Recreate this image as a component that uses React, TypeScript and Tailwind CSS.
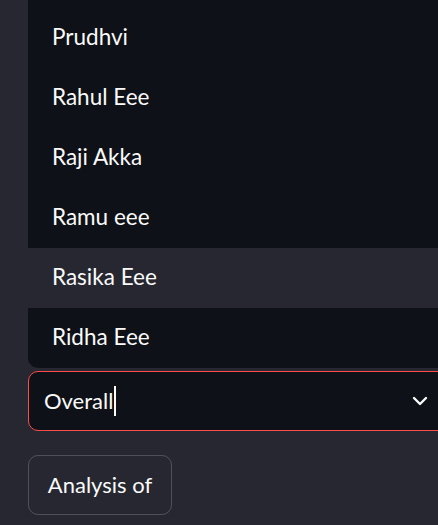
import React from "react";

const items = ["Prudhvi", "Rahul Eee", "Raji Akka", "Ramu eee", "Rasika Eee", "Ridha Eee"];

export default function App() {
  return (
    <div
      className="w-[438px] h-[525px] overflow-hidden bg-[#262730] text-[#fafafa] relative"
      style={{ fontFamily: '"Source Sans Pro", "Lato", "Noto Sans", sans-serif' }}
    >
      <div className="pl-[28px] flex flex-col">
        <div className="h-[368px] overflow-hidden rounded-b-[10px] bg-[#0e1117] w-[430px] flex flex-col justify-end">
          {items.map((it) => (
            <div
              key={it}
              className={`h-[60px] shrink-0 flex items-center pl-[24px] pb-[3px] text-[22.5px] ${it === "Rasika Eee" ? "bg-[#262730]" : ""}`}
            >
              {it}
            </div>
          ))}
        </div>
        <div className="mt-[3px] h-[60px] w-[430px] rounded-[10px] border border-[#ff4b4b] bg-[#0e1117] flex items-center pl-[15px]">
          <span className="text-[22px] leading-none">Overall</span>
          <span className="w-[2px] h-[30px] bg-[#fafafa] ml-[1px]" />
          <svg className="ml-auto mr-[29px]" width="16" height="16" viewBox="0 0 16 16" fill="none">
            <path d="M2 5 L8 11 L14 5" stroke="#fafafa" strokeWidth="2.4" strokeLinecap="round" strokeLinejoin="round" />
          </svg>
        </div>
        <div className="mt-[24px] h-[60px] w-[144px] rounded-[10px] border border-[rgba(250,250,250,0.2)] flex items-center justify-center pb-[2px] text-[22px]">
          Analysis of
        </div>
      </div>
    </div>
  );
}
